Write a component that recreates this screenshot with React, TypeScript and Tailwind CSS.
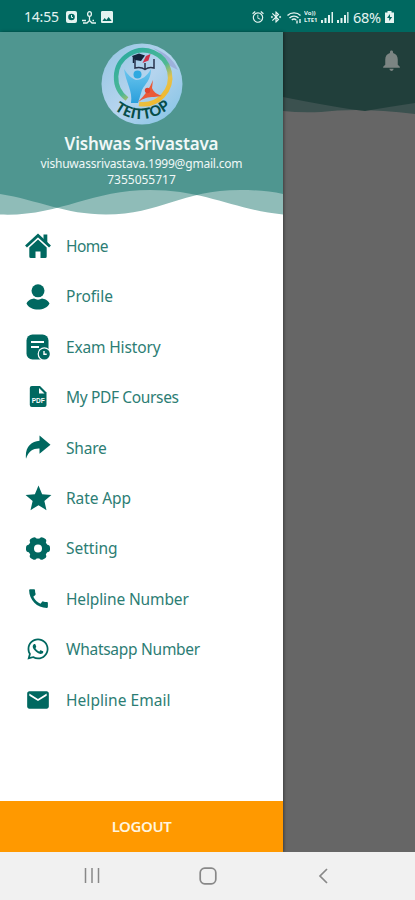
import type { ReactNode } from 'react'
import { FaWhatsapp } from 'react-icons/fa'
import {
  MdAlarm,
  MdBluetoothConnected,
  MdCall,
  MdEmail,
  MdImage,
  MdNotifications,
  MdStar,
} from 'react-icons/md'

type MenuItem = {
  label: string
  icon: ReactNode
  tracking: string
}

function HomeIcon() {
  return (
    <svg width="26" height="26" viewBox="0 0 26 26">
      <path d="M1 13.500 13 2.500l12 11" fill="none" stroke="currentColor" strokeWidth="2.800" />
      <path d="M18.500 1.500h3.800v9l-3.800-3.500Z" fill="currentColor" />
      <path
        d="m13 6.600 8.700 8v8.900a1.500 1.500 0 0 1-1.500 1.500H15.500v-6.500h-5V25H5.800a1.500 1.500 0 0 1-1.500-1.500v-8.900Z"
        fill="currentColor"
      />
    </svg>
  )
}

function ProfileIcon() {
  return (
    <svg width="26" height="26" viewBox="0 0 26 26" fill="currentColor">
      <circle cx="13" cy="6.800" r="6.500" />
      <path d="M1.500 19.500C3.200 16 6.500 14.800 9 14.500c2.500 1.500 5.500 1.500 8 0 2.500.3 5.800 1.500 7.500 5-2 4-6.500 6-11.500 6s-9.500-2-11.500-6Z" />
    </svg>
  )
}

function HistoryIcon() {
  return (
    <svg width="26" height="26" viewBox="0 0 26 26">
      <rect x="1.500" y="0.500" width="22" height="25" rx="6" fill="currentColor" />
      <path d="M6 8h13M6 13h8" stroke="#fff" strokeWidth="2.200" />
      <circle cx="19.300" cy="20" r="6.700" fill="#fff" />
      <circle cx="19.300" cy="20" r="5.500" fill="currentColor" />
      <path d="M19 17v3.300h2.700" fill="none" stroke="#fff" strokeWidth="1.400" />
    </svg>
  )
}

function PdfIcon() {
  return (
    <svg width="26" height="26" viewBox="0 0 26 26">
      <path
        d="M6.800 2H15l6.500 6.500v12.500a2 2 0 0 1-2 2H6.800a2 2 0 0 1-2-2V4a2 2 0 0 1 2-2Z"
        fill="currentColor"
      />
      <path d="M14 4v5.500h5.500Z" fill="#fff" />
      <text
        x="13.200"
        y="19.300"
        textAnchor="middle"
        fontSize="6.500"
        fontWeight="700"
        fontFamily="Liberation Sans, sans-serif"
        fill="#fff"
      >
        PDF
      </text>
    </svg>
  )
}

function ShareIcon() {
  return (
    <svg width="26" height="26" viewBox="0 0 26 26" fill="currentColor">
      <path d="M14.500.5 25.500 9.800 14.500 18.800v-5.200C8.500 13.300 3.500 16 1 23.800-.3 12.500 6 6.300 14.500 5.800Z" />
    </svg>
  )
}

function GearIcon() {
  return (
    <svg width="26" height="26" viewBox="0 0 26 26">
      <g fill="currentColor">
        <circle cx="13" cy="12.500" r="10" />
        {[0, 60, 120].map((angle) => (
          <rect
            key={angle}
            x="1"
            y="8.700"
            width="24"
            height="7.600"
            rx="3"
            transform={`rotate(${angle} 13 12.500)`}
          />
        ))}
      </g>
      <circle cx="13" cy="12.500" r="4" fill="#fff" />
    </svg>
  )
}

const menuItems: MenuItem[] = [
  { label: 'Home', icon: <HomeIcon />, tracking: 'tracking-[-0.5px]' },
  { label: 'Profile', icon: <ProfileIcon />, tracking: 'tracking-[0px]' },
  { label: 'Exam History', icon: <HistoryIcon />, tracking: 'tracking-[-0.15px]' },
  { label: 'My PDF Courses', icon: <PdfIcon />, tracking: 'tracking-[-0.35px]' },
  { label: 'Share', icon: <ShareIcon />, tracking: 'tracking-[-0.2px]' },
  { label: 'Rate App', icon: <MdStar size={31} className="shrink-0" />, tracking: 'tracking-[-0.1px]' },
  { label: 'Setting', icon: <GearIcon />, tracking: 'tracking-[0px]' },
  { label: 'Helpline Number', icon: <MdCall size={25} />, tracking: 'tracking-[-0.13px]' },
  { label: 'Whatsapp Number', icon: <FaWhatsapp size={24} />, tracking: 'tracking-[-0.27px]' },
  { label: 'Helpline Email', icon: <MdEmail size={26} />, tracking: 'tracking-[0.05px]' },
]

function StatusBar() {
  return (
    <header className="flex h-8 shrink-0 items-center justify-between bg-[#006860] pl-6 pr-[21px] pt-0.5 text-[#e4f3f0]">
      <div className="flex items-center gap-[5px]">
        <span className="w-[37px] text-[14px] leading-none tracking-[-0.2px]">14:55</span>
        <svg width="11" height="12" viewBox="0 0 11 12">
          <rect width="11" height="12" rx="2" fill="currentColor" />
          <circle cx="5.500" cy="6" r="3.300" fill="#006860" />
          <path d="M5.500 4v2.500H7" stroke="currentColor" fill="none" />
        </svg>
        <svg width="14" height="13" viewBox="0 0 14 13" fill="none" stroke="currentColor" strokeWidth="1.300">
          <ellipse cx="7.500" cy="3" rx="1.900" ry="2.300" />
          <path d="M7.500 5.500v4M0 9.500h4M1 12h4l2.500-2.500L10 12h4M10.500 9.500H12" />
        </svg>
        <MdImage size={16} className="-ml-0.5" />
      </div>
      <div className="flex items-center">
        <MdAlarm size={14} />
        <MdBluetoothConnected size={14} className="ml-1" />
        <svg className="ml-1" width="15" height="13" viewBox="0 0 15 13" fill="none" stroke="currentColor" strokeWidth="1.400">
          <path d="M.5 4.500C4 1 10 1 13.500 4.500M2.500 7c2.500-2.500 6.500-2.500 9 0M4.800 9c1.200-1.200 3.200-1.200 4.400 0" />
          <path d="M10 9.500v3M13 8v4" />
        </svg>
        <div className="ml-0.5 flex w-[15px] flex-col whitespace-nowrap text-[6px] font-bold leading-[7px]">
          <span className="block h-[7px] overflow-hidden">Vo))</span>
          <span className="block h-[7px] overflow-hidden">LTE1</span>
        </div>
        <svg className="ml-0.5" width="28" height="12" viewBox="0 0 28 12" fill="currentColor">
          <path d="M0 9h2v3H0zM3.500 7h2v5h-2zM7 4h2v8H7zM10.500 1h1.500v11h-1.500z" />
          <path d="M16 9h2v3h-2zM19.500 7h2v5h-2zM23 4h2v8h-2zM26.200 1h1.300v11h-1.300z" />
        </svg>
        <span className="ml-1 w-[30px] whitespace-nowrap text-[14.500px] leading-none tracking-[-0.3px]">68%</span>
        <svg className="ml-0.5" width="9" height="12" viewBox="0 0 9 12">
          <path d="M2.500 0h4v1.500H9V12H0V1.500h2.500Z" fill="currentColor" />
          <path d="m5 3-3 4h2.200v3l3-4H5Z" fill="#006860" />
        </svg>
      </div>
    </header>
  )
}

function Logo() {
  return (
    <svg width="82" height="82" viewBox="0 0 82 82">
      <defs>
        <linearGradient id="disc" x1="0" y1="0" x2="1" y2="1">
          <stop offset="0" stopColor="#93c4e2" />
          <stop offset="0.500" stopColor="#b5d4ee" />
          <stop offset="1" stopColor="#81c2e4" />
        </linearGradient>
        <linearGradient id="ring" x1="0" y1="0" x2="0.700" y2="1">
          <stop offset="0" stopColor="#27a9a0" />
          <stop offset="0.600" stopColor="#4fb894" />
          <stop offset="0.800" stopColor="#e2c24e" />
          <stop offset="1" stopColor="#f2b92f" />
        </linearGradient>
        <linearGradient id="body" x1="0" y1="0" x2="0" y2="1">
          <stop offset="0" stopColor="#6cc6ee" />
          <stop offset="1" stopColor="#2a9fdc" />
        </linearGradient>
        <path id="arc" d="M9 63Q40 90 74 61" />
      </defs>
      <circle cx="41" cy="41" r="40.500" fill="url(#disc)" />
      <path d="M52 5Q70 11 77 27L69 23Q63 12 52 5Z" fill="#9db1dc" />
      <path
        d="M26 56A27 27 0 1 1 38 61"
        fill="none"
        stroke="url(#ring)"
        strokeWidth="4.500"
      />
      <path d="M23 26c4 6 7 9 12 11 6 0 11-4 15-11 0 11-6 15-9 21l-4 13h-7c2-12-5-20-7-34Z" fill="url(#body)" />
      <circle cx="36.500" cy="31.500" r="4" fill="#2fa9e0" />
      <path d="M52 37c-3 8-8 15-15 22 6-4 10-5 16-5l8-1c-6-2-9-5-10-8Z" fill="#ea5a38" />
      <circle cx="46.500" cy="47.500" r="2.700" fill="#e0452f" />
      <path d="M34 16v9q6-1.500 10 1.500 4-3 9-1.500v-9M44 26v-6" fill="none" stroke="#28334c" strokeWidth="1.500" />
      <path d="m31 13 7-2.500 6 2-4 5.500-6-1Z" fill="#14243c" />
      <path d="M32.500 13v7" stroke="#14243c" strokeWidth="1.500" />
      <path d="m41.500 20 3.500-7 4.500-2-2 6.500Z" fill="#cf3148" />
      <text fill="#064d48" fontSize="14.500" fontWeight="900" letterSpacing="0.2" fontFamily="Lato, sans-serif">
        <textPath href="#arc" startOffset="50%" textAnchor="middle">
          TEITTOP
        </textPath>
      </text>
    </svg>
  )
}

function DrawerWave() {
  const first = 'M0 0V24.500C58 27 90 0 150 0C205 0 235 20 283 24.500V0Z'
  const second = 'M0 0V4C38 10 65 24.500 106 24.500C160 24.500 182 0 240 0C256 0 270 1 283 4V0Z'
  return (
    <svg className="block w-full shrink-0" height="25" viewBox="0 0 283 25" preserveAspectRatio="none">
      <clipPath id="overlap">
        <path d={first} />
      </clipPath>
      <path d={first} fill="#8fbcb8" />
      <path d={second} fill="#8fbcb8" />
      <path d={second} fill="#4f9690" clipPath="url(#overlap)" />
    </svg>
  )
}

function Drawer() {
  return (
    <aside className="z-10 flex w-[283px] shrink-0 flex-col bg-white shadow-[1px_0_3px_rgba(0,0,0,0.4)]">
      <div className="flex h-[158px] shrink-0 flex-col items-center bg-[#4f9690] pt-[11px] text-[#f0f8f7]">
        <Logo />
        <h1 className="mt-[9px] text-[17px] font-semibold leading-5 tracking-[-0.17px]">Vishwas Srivastava</h1>
        <p className="mt-0.5 text-[12px] leading-4 tracking-[-0.2px]">vishuwassrivastava.1999@gmail.com</p>
        <p className="text-[12px] leading-4">7355055717</p>
      </div>
      <DrawerWave />
      <nav className="flex flex-col pt-[6px] text-[#006860]">
        {menuItems.map((item) => (
          <a key={item.label} className="flex h-[50.4px] items-center pl-6">
            <span className="flex w-7 justify-center">{item.icon}</span>
            <span className={`ml-3.5 whitespace-nowrap pt-px text-[15.500px] text-[#2c7d74] ${item.tracking}`}>
              {item.label}
            </span>
          </a>
        ))}
      </nav>
      <button className="mt-auto h-[51px] w-full bg-[#ff9900] text-[15px] font-semibold tracking-[-0.4px] text-[#fff5df]">
        LOGOUT
      </button>
    </aside>
  )
}

function DimmedPage() {
  return (
    <main className="min-w-0 flex-1 bg-[#666]">
      <div className="flex h-[65px] justify-end bg-[#213f3b] pr-[11px] pt-4 text-[#7c8583]">
        <MdNotifications size={25} />
      </div>
      <svg className="block w-full" height="17" viewBox="0 0 132 17" preserveAspectRatio="none">
        <path d="M0 0H132V17Q76 10 38 15Q18 16 0 14Z" fill="#3b514f" />
        <path d="M0 0H132V6Q105 10 82 14Q50 10 0 0Z" fill="#213f3b" />
      </svg>
    </main>
  )
}

function NavigationBar() {
  return (
    <footer className="z-20 flex h-12 shrink-0 items-center bg-[#f1f1f1] px-[34px] text-[#888]">
      <div className="flex flex-1 justify-center">
        <svg width="16" height="16" viewBox="0 0 16 16" stroke="currentColor" strokeWidth="1.500">
          <path d="M1.500 0v15M8 0v15M14.500 0v15" />
        </svg>
      </div>
      <div className="flex flex-1 justify-center">
        <svg width="18" height="18" viewBox="0 0 18 18" fill="none" stroke="currentColor" strokeWidth="1.700">
          <rect x="1.200" y="1.200" width="15.600" height="15.600" rx="4.500" />
        </svg>
      </div>
      <div className="flex flex-1 justify-center">
        <svg width="10" height="16" viewBox="0 0 10 16" fill="none" stroke="currentColor" strokeWidth="1.700">
          <path d="M9 1 2 8l7 7" />
        </svg>
      </div>
    </footer>
  )
}

export default function App() {
  return (
    <div className="flex h-[900px] w-[415px] flex-col overflow-hidden font-['Noto_Sans',sans-serif]">
      <StatusBar />
      <div className="flex min-h-0 flex-1">
        <Drawer />
        <DimmedPage />
      </div>
      <NavigationBar />
    </div>
  )
}
